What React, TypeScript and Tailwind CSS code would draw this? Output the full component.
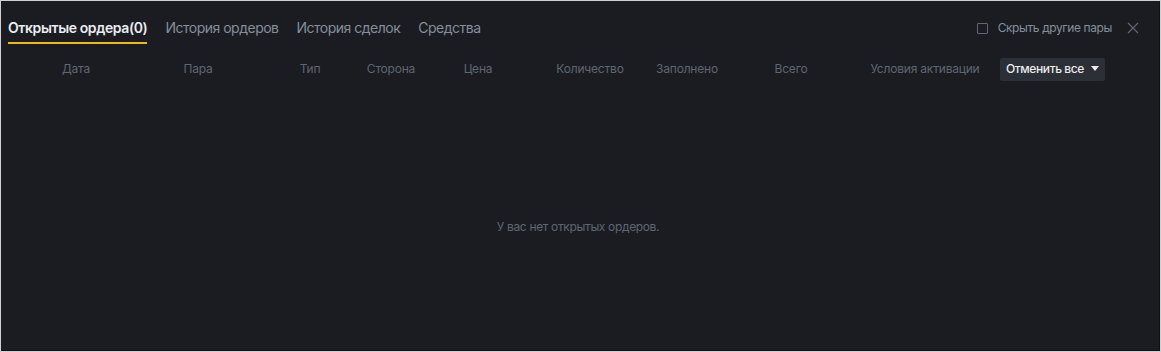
import React from "react";

const cols: { label: string; w: string }[] = [
  { label: "Дата", w: "w-[120px]" },
  { label: "Пара", w: "w-[124px]" },
  { label: "Тип", w: "w-[100px]" },
  { label: "Сторона", w: "w-[62px]" },
  { label: "Цена", w: "w-[112px]" },
  { label: "Количество", w: "w-[112px]" },
  { label: "Заполнено", w: "w-[82px]" },
  { label: "Всего", w: "w-[126px]" },
  { label: "Условия активации", w: "w-[142px]" },
];

function Tab({ label, active }: { label: string; active?: boolean }) {
  return (
    <div className="flex flex-col">
      <div
        className={
          active
            ? "leading-[20px] text-[14px] font-semibold text-[#eaecef] tracking-[-0.4px] whitespace-nowrap"
            : "leading-[20px] text-[14px] text-[#848e9c] tracking-[-0.5px] whitespace-nowrap"
        }
      >
        {label}
      </div>
      <div className={active ? "mt-[4px] h-[2px] bg-[#f0b90b]" : "mt-[4px] h-[2px]"} />
    </div>
  );
}

export default function App() {
  return (
    <div
      className="w-[1161px] h-[352px] border border-[#cfd0d2] bg-[#1b1c21]"
      style={{ fontFamily: "Inter, 'Noto Sans', sans-serif" }}
    >
      <div className="h-full w-full border-r border-b border-[#101114] flex flex-col">
        <div className="flex items-start pl-[7px] pr-[20px] pt-[17px]">
          <div className="flex gap-[18px]">
            <Tab label="Открытые ордера(0)" active />
            <Tab label="История ордеров" />
            <Tab label="История сделок" />
            <Tab label="Средства" />
          </div>
          <div className="ml-auto flex items-center h-[20px]">
            <div className="w-[11px] h-[11px] border border-[#5e6673] rounded-[1px]" />
            <span className="ml-[10px] text-[12px] text-[#848e9c] tracking-[-0.4px]">Скрыть другие пары</span>
            <svg className="ml-[15px]" width="12" height="12" viewBox="0 0 12 12">
              <path d="M1 1L11 11M11 1L1 11" stroke="#5e6673" strokeWidth="1.2" />
            </svg>
          </div>
        </div>
        <div className="flex items-center h-[24px] mt-[13px] pl-[15px]">
          {cols.map((c) => (
            <div key={c.label} className={`${c.w} text-center text-[12px] text-[#5e6673] tracking-[-0.2px] whitespace-nowrap`}>
              {c.label}
            </div>
          ))}
          <div className="ml-[4px] w-[105px] h-[23px] bg-[#2b2f36] rounded-[2px] flex items-center justify-center gap-[7px] text-[12px] font-medium text-[#eaecef] tracking-[-0.4px]">
            Отменить все
            <svg width="8" height="6" viewBox="0 0 8 6">
              <path d="M0 0H8L4 5Z" fill="#eaecef" />
            </svg>
          </div>
        </div>
        <div className="flex-1 flex items-center justify-center pt-[23px] pr-[4px]">
          <span className="text-[12px] text-[#5e6673] tracking-[-0.35px]">У вас нет открытых ордеров.</span>
        </div>
      </div>
    </div>
  );
}
